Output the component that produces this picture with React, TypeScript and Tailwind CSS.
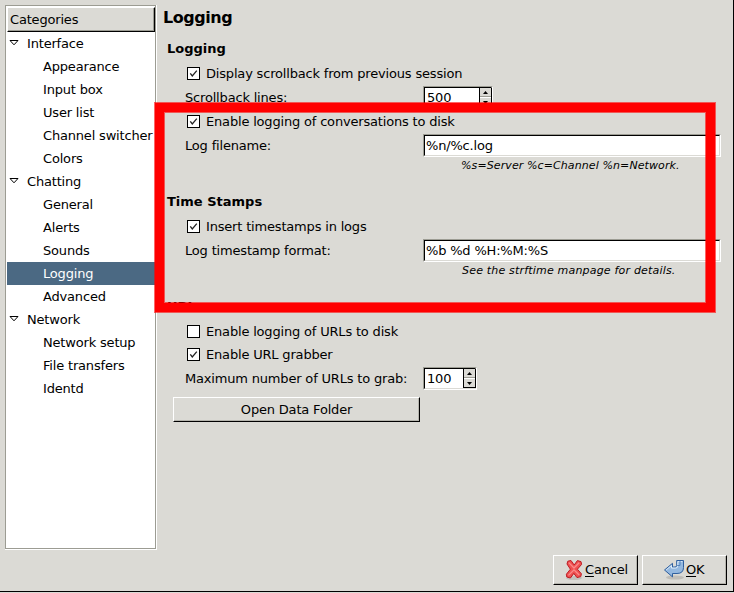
import type { ReactNode } from "react";

const groups = [
  { name: "Interface", items: ["Appearance", "Input box", "User list", "Channel switcher", "Colors"] },
  { name: "Chatting", items: ["General", "Alerts", "Sounds", "Logging", "Advanced"] },
  { name: "Network", items: ["Network setup", "File transfers", "Identd"] },
];

function Sidebar() {
  return (
    <nav className="h-[545px] w-[152px] shrink-0 border-r border-b border-white">
      <div className="h-full border border-[#9c9c93] bg-white pt-px pl-px">
        <div className="flex h-[25px] w-[148px] items-center border-t border-l border-r border-b border-t-white border-l-white border-r-black border-b-black bg-[#dbdad5] pl-[2px] shadow-[inset_-1px_-1px_0_#9c9c93]">
          Categories
        </div>
        {groups.map((g) => (
          <div key={g.name}>
            <div className="flex h-[23px] items-center">
              <svg width="10" height="6" viewBox="0 0 10 6" className="mr-[10px] ml-[2px] -mt-[2px]">
                <path d="M1 .5h8L5 4.8z" fill="white" stroke="black" strokeWidth="1" />
              </svg>
              <span className="-ml-[2px]">{g.name}</span>
            </div>
            {g.items.map((i) => (
              <div
                key={i}
                className={
                  i === "Logging"
                    ? "flex h-[23px] items-center bg-[#4b6983] pl-[36px] text-white"
                    : "flex h-[23px] items-center pl-[36px]"
                }
              >
                {i}
              </div>
            ))}
          </div>
        ))}
      </div>
    </nav>
  );
}

function Check({ on = true, tight = false, children }: { on?: boolean; tight?: boolean; children: ReactNode }) {
  return (
    <div className="flex h-full items-center pl-[20px]">
      <span className="mr-[6px] h-[13px] w-[13px] border border-black bg-white">
        {on && (
          <svg width="11" height="11" viewBox="0 0 11 11">
            <path d="M2.3 5.3L4.3 8L8.8 2.6" fill="none" stroke="#222" strokeWidth="1.3" />
          </svg>
        )}
      </span>
      <span className={tight ? "" : "pt-[2px]"}>{children}</span>
    </div>
  );
}

function Sunken({ className, children }: { className: string; children: ReactNode }) {
  return (
    <div className={"h-[23px] border border-t-[#9c9c93] border-l-[#9c9c93] border-r-white border-b-white " + className}>
      <div className="flex h-full border border-t-black border-l-black border-r-[#dbdad5] border-b-[#dbdad5] bg-white">
        {children}
      </div>
    </div>
  );
}

function Spin({ value, className }: { value: string; className: string }) {
  return (
    <Sunken className={className}>
      <span className="flex flex-1 items-center pl-[2px]">{value}</span>
      <span className="-mr-px flex w-[13px] flex-col border-r border-l border-black bg-[#dbdad5]">
        <span className="flex flex-1 items-center justify-center border-b border-[#9c9c93]">
          <svg width="5" height="3" viewBox="0 0 5 3"><path d="M0 3L2.5 0L5 3z" /></svg>
        </span>
        <span className="flex flex-1 items-center justify-center border-t border-b border-t-white border-b-black">
          <svg width="5" height="3" viewBox="0 0 5 3"><path d="M0 0L2.5 3L5 0z" /></svg>
        </span>
      </span>
    </Sunken>
  );
}

function Field({ label, children }: { label: string; children: ReactNode }) {
  return (
    <div className="flex h-full items-center pl-[18px]">
      <span className="w-[238px]">{label}</span>
      {children}
    </div>
  );
}

const raised =
  "flex items-center border border-t-white border-l-white border-r-black border-b-black shadow-[inset_-1px_-1px_0_#b5b4ad]";

export default function App() {
  return (
    <div className="relative h-[593px] w-[734px] overflow-hidden bg-[#dbdad5] font-['DejaVu_Sans',sans-serif] text-[13px] leading-[16px] tracking-[-0.18px] whitespace-nowrap text-black">
      <div className="flex h-[592px] flex-col border-r border-b border-black pt-[5px] pl-[5px]">
        <div className="flex">
          <Sidebar />
          <main className="flex-1 pl-[6px]">
            <h1 className="flex h-[31px] items-start pt-[3px] text-[16px] leading-[20px] font-bold tracking-[-0.45px]">Logging</h1>
            <div className="pl-[4px]">
              <h2 className="flex h-[25px] items-center font-bold tracking-normal">Logging</h2>
              <div className="h-[24px]"><Check>Display scrollback from previous session</Check></div>
              <div className="h-[24px] pt-px"><Field label="Scrollback lines:"><Spin value="500" className="w-[70px]" /></Field></div>
              <div className="h-[24px]"><Check>Enable logging of conversations to disk</Check></div>
              <div className="h-[24px] pt-px">
                <Field label="Log filename:">
                  <Sunken className="w-[298px]"><span className="flex items-center pl-px">%n/%c.log</span></Sunken>
                </Field>
              </div>
              <div className="h-[16px] pt-px pl-[294px] text-[11px] tracking-[0.1px] italic">%s=Server %c=Channel %n=Network.</div>
              <h2 className="mt-[16px] flex h-[24px] items-center pt-[2px] font-bold tracking-normal">Time Stamps</h2>
              <div className="mt-px h-[24px]"><Check>Insert timestamps in logs</Check></div>
              <div className="h-[24px] pt-px">
                <Field label="Log timestamp format:">
                  <Sunken className="w-[298px]"><span className="flex items-center pl-px">%b %d %H:%M:%S</span></Sunken>
                </Field>
              </div>
              <div className="h-[16px] pt-px pl-[295px] text-[11px] tracking-[0.19px] italic">See the strftime manpage for details.</div>
              <h2 className="mt-[16px] flex h-[24px] items-center pt-[2px] font-bold tracking-normal">URLs</h2>
              <div className="mt-px h-[24px]"><Check on={false}>Enable logging of URLs to disk</Check></div>
              <div className="h-[23px]"><Check tight>Enable URL grabber</Check></div>
              <div className="h-[25px]"><Field label="Maximum number of URLs to grab:"><Spin value="100" className="w-[54px]" /></Field></div>
              <button className={raised + " mt-[6px] ml-[6px] h-[25px] w-[247px] justify-center"}>Open Data Folder</button>
            </div>
          </main>
        </div>
        <footer className="mt-[5px] flex justify-end gap-[4px] pr-[6px]">
          <button className={raised + " h-[30px] w-[85px] pl-[10px]"}>
            <svg width="20" height="22" viewBox="0 0 20 22" className="mr-px">
              <ellipse cx="10" cy="19" rx="8" ry="2" fill="#a9a8a3" opacity=".5" />
              <path
                d="M3.8 2.2L7 1.5L10.2 6L13.4 1.6L17 2.6L17.6 5.4L13.4 10.2L17.4 14.8L16.8 17.6L13 18.6L9.8 14.4L6.4 19L2.8 18L2.4 15.2L6.4 10.2L3 5z"
                fill="#ef5050" stroke="#bd1c24" strokeWidth="1" strokeLinejoin="round"
              />
              <path d="M4.8 3.6L10 9L15.2 3.8M4.4 16.4L10 10.8L15.2 16" fill="none" stroke="#fa8b8b" strokeWidth="1.3" />
            </svg>
            <span><u className="underline-offset-2">C</u>ancel</span>
          </button>
          <button className={raised + " h-[30px] w-[85px] pl-[20px]"}>
            <svg width="23" height="22" viewBox="0 0 23 22">
              <ellipse cx="12" cy="18.5" rx="9" ry="2" fill="#a9a8a3" opacity=".55" />
              <path
                d="M1.5 11L9.5 4.3V8H12Q13.7 8 13.7 6.4V1.5H20.5V8.4Q20.5 14.5 14 14.5H9.5V17.9z"
                fill="#94b8df" stroke="#2f5f9e" strokeWidth="1" strokeLinejoin="round"
              />
              <path d="M3.1 11L8.5 6.5V9.1H12.6Q14.8 9 14.8 6.8V2.6H19.4" fill="none" stroke="#dcebf9" strokeWidth="1" />
              <path d="M14.2 6.5H17V2" fill="none" stroke="#5584bd" strokeWidth="1" />
            </svg>
            <span><u className="underline-offset-2">O</u>K</span>
          </button>
        </footer>
      </div>
      <div className="absolute top-[103px] left-[155px] h-[209px] w-[560px] border-9 border-[#ff0000] shadow-[0_0_0_1px_#ff000099,inset_0_0_0_1px_#ff000099]" />
    </div>
  );
}
